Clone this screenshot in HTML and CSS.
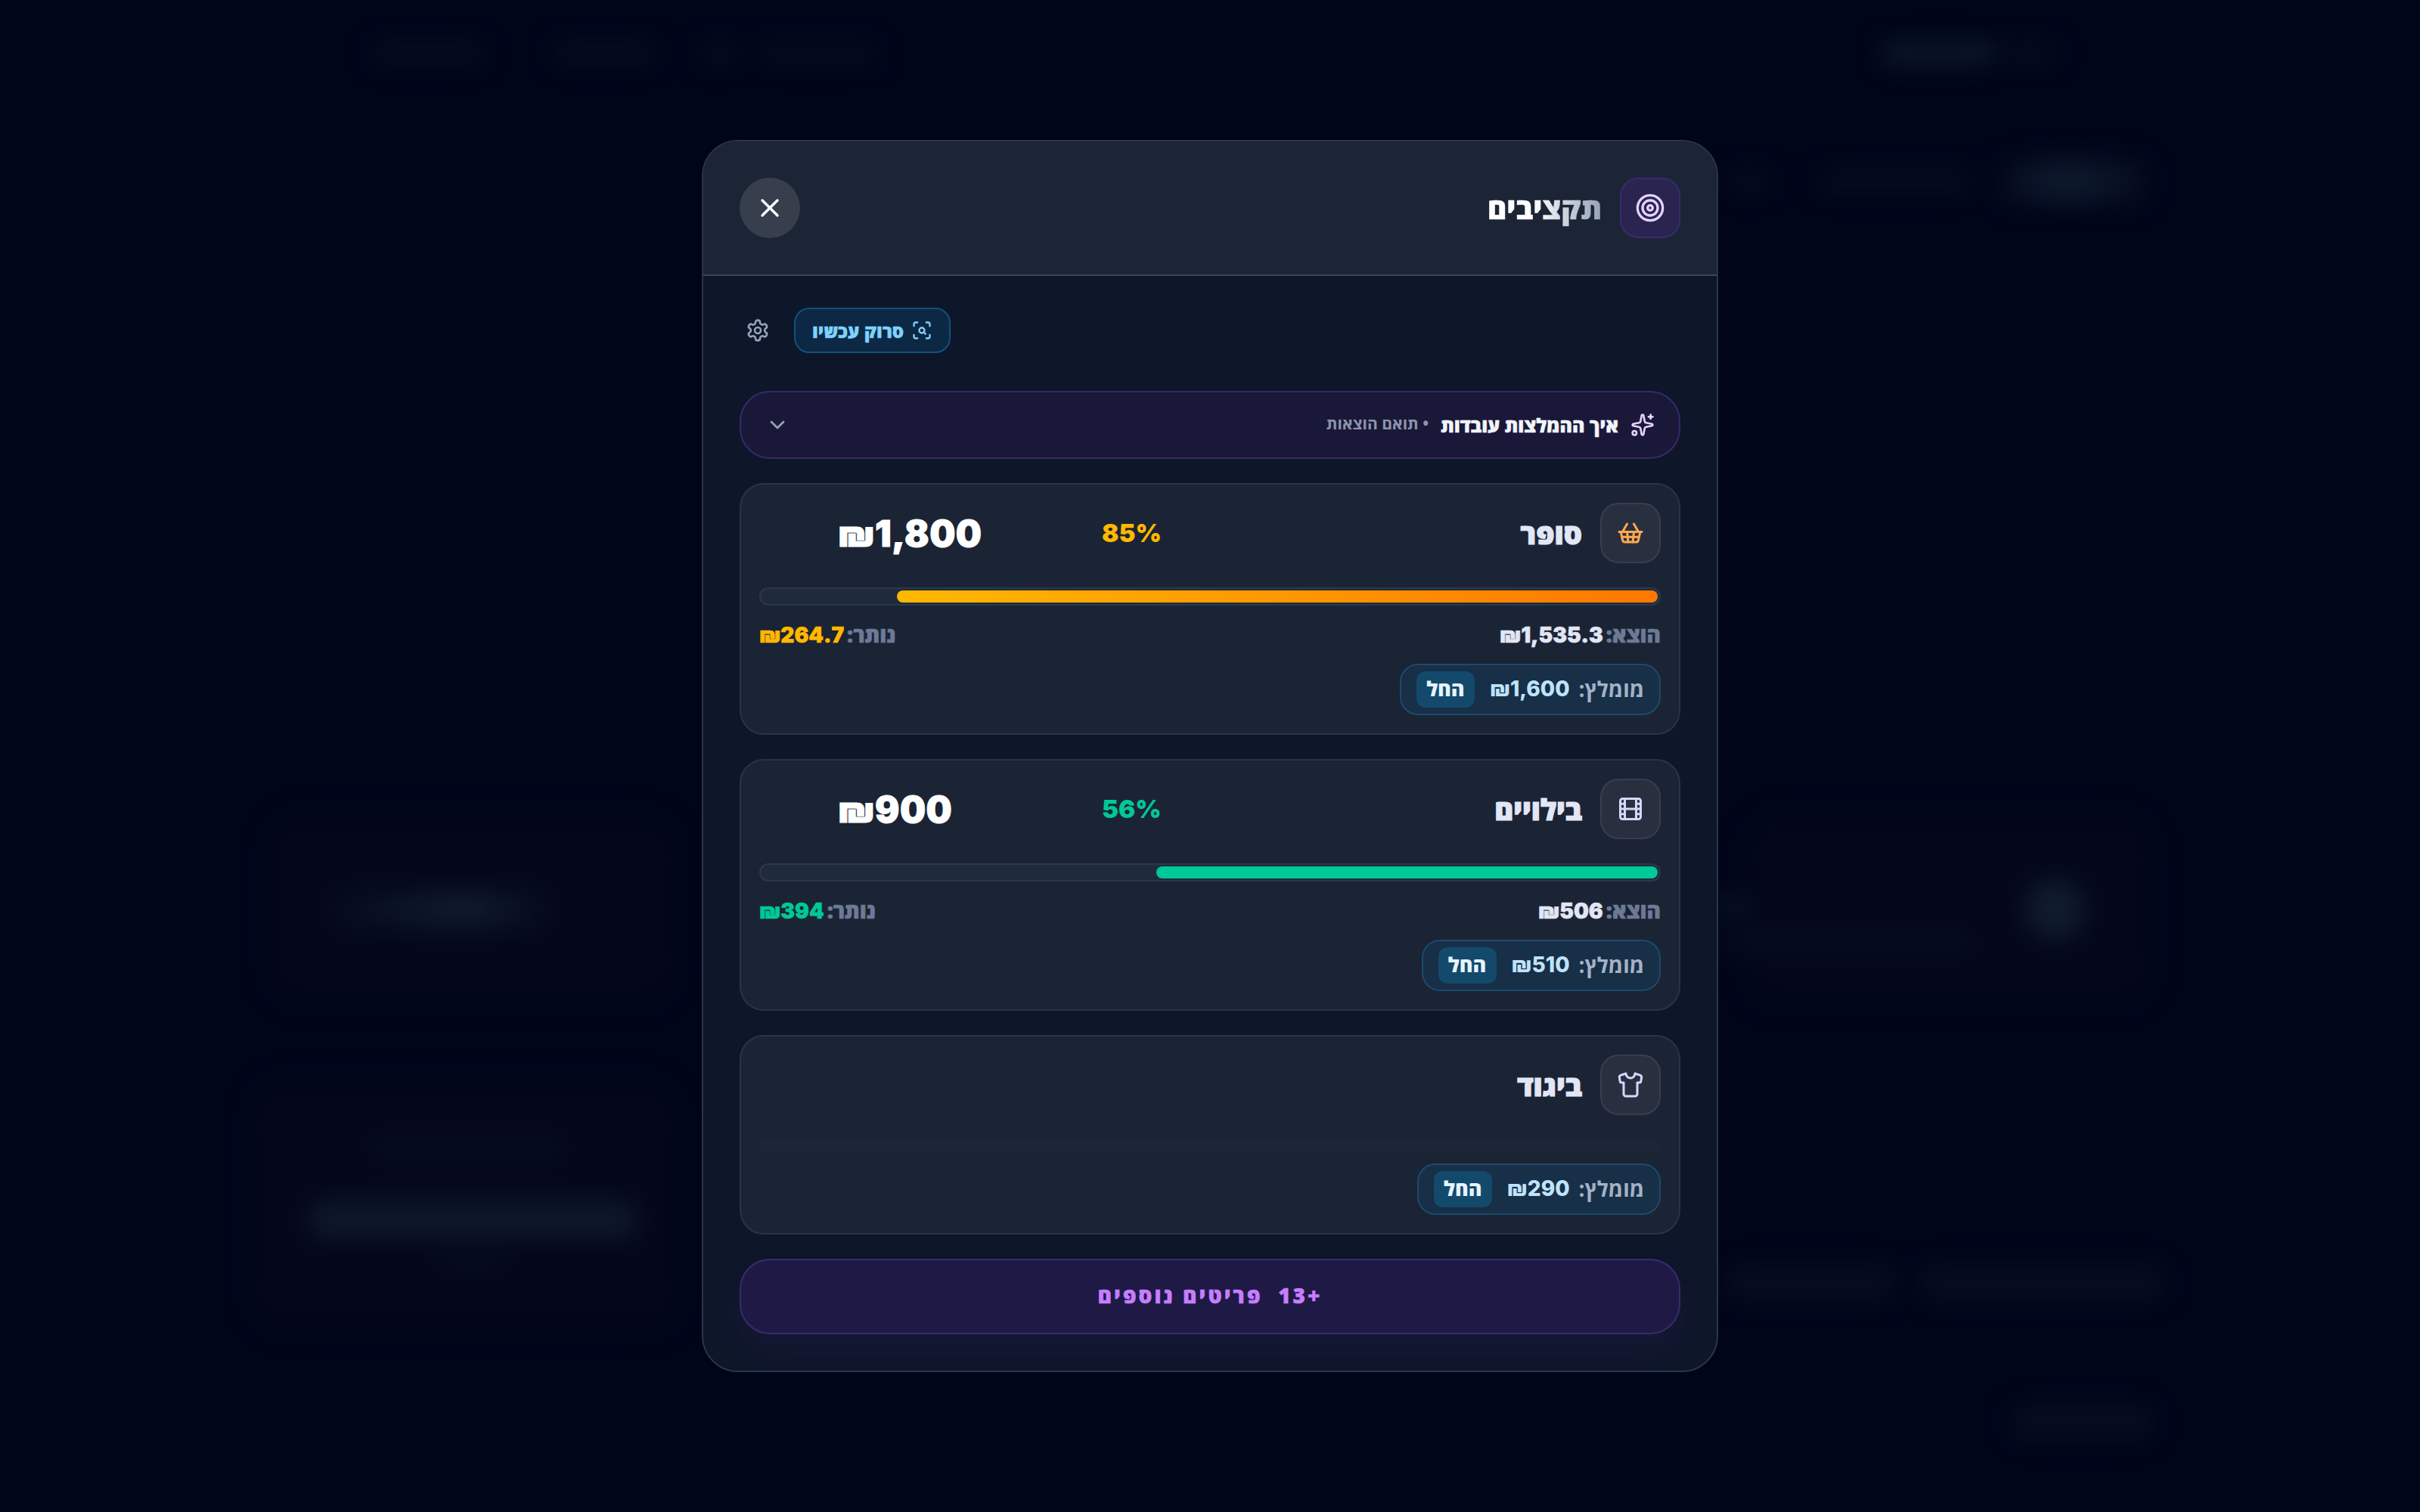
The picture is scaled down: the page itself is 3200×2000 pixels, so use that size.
FILE: index.html

```html
<!DOCTYPE html>
<html lang="he">
<head>
  <meta charset="UTF-8" />
  <meta name="viewport" content="width=device-width, initial-scale=1.0" />
  <title>תקציבים</title>
  <link rel="stylesheet" href="styles.css">
</head>
<body>
  <!-- blurred page behind the dialog -->
  <div class="page-bg">
    <div class="bg-nav">
      <div class="blob nav-a"></div>
      <div class="blob nav-b"></div>
      <div class="blob nav-c"></div>
      <div class="blob nav-e"></div>
      <div class="blob nav-d"></div>
      <div class="blob nav-user"></div>
    </div>
    <div class="bg-tools">
      <div class="blob tool-a"></div>
      <div class="blob tool-b"></div>
      <div class="blob tool-c"></div>
    </div>
    <div class="bg-stats">
      <div class="bg-card stat-left"><div class="blob stat-left-line"></div></div>
      <div class="bg-card stat-right">
        <div class="stat-right-text">
          <div class="blob stat-right-tick"></div>
          <div class="blob stat-right-line"></div>
        </div>
        <div class="blob stat-right-icon"></div>
      </div>
    </div>
    <div class="bg-lower">
      <div class="bg-card total-card">
        <div class="blob total-label"></div>
        <div class="blob total-value"></div>
        <div class="blob total-sub"></div>
      </div>
      <div class="bg-pills">
        <div class="blob pill-a"></div>
        <div class="blob pill-b"></div>
      </div>
    </div>
    <div class="bg-foot"><div class="blob foot-a"></div></div>
  </div>

  <div class="overlay">
    <div class="modal" dir="rtl">
      <div class="modal-header">
        <div class="header-title">
          <div class="header-icon">
            <svg class="icon icon-40" viewBox="0 0 24 24"><circle cx="12" cy="12" r="10"/><circle cx="12" cy="12" r="6"/><circle cx="12" cy="12" r="2"/></svg>
          </div>
          <h2>תקציבים</h2>
        </div>
        <button class="close-btn" aria-label="סגור">
          <svg class="icon icon-40" viewBox="0 0 24 24"><path d="M18 6 6 18"/><path d="m6 6 12 12"/></svg>
        </button>
      </div>

      <div class="modal-body">
        <div class="toolbar">
          <button class="scan-btn">
            <svg class="icon icon-28" viewBox="0 0 24 24"><path d="M3 7V5a2 2 0 0 1 2-2h2"/><path d="M17 3h2a2 2 0 0 1 2 2v2"/><path d="M21 17v2a2 2 0 0 1-2 2h-2"/><path d="M7 21H5a2 2 0 0 1-2-2v-2"/><circle cx="12" cy="12" r="3"/><path d="m16 16-1.9-1.9"/></svg>
            <span>סרוק עכשיו</span>
          </button>
          <button class="gear-btn" aria-label="הגדרות">
            <svg class="icon icon-32" viewBox="0 0 24 24"><path d="M12.22 2h-.44a2 2 0 0 0-2 2v.18a2 2 0 0 1-1 1.73l-.43.25a2 2 0 0 1-2 0l-.15-.08a2 2 0 0 0-2.73.73l-.22.38a2 2 0 0 0 .73 2.73l.15.1a2 2 0 0 1 1 1.72v.51a2 2 0 0 1-1 1.74l-.15.09a2 2 0 0 0-.73 2.73l.22.38a2 2 0 0 0 2.73.73l.15-.08a2 2 0 0 1 2 0l.43.25a2 2 0 0 1 1 1.73V20a2 2 0 0 0 2 2h.44a2 2 0 0 0 2-2v-.18a2 2 0 0 1 1-1.73l.43-.25a2 2 0 0 1 2 0l.15.08a2 2 0 0 0 2.73-.73l.22-.39a2 2 0 0 0-.73-2.73l-.15-.08a2 2 0 0 1-1-1.74v-.5a2 2 0 0 1 1-1.74l.15-.09a2 2 0 0 0 .73-2.73l-.22-.38a2 2 0 0 0-2.73-.73l-.15.08a2 2 0 0 1-2 0l-.43-.25a2 2 0 0 1-1-1.73V4a2 2 0 0 0-2-2z"/><circle cx="12" cy="12" r="3"/></svg>
          </button>
        </div>

        <div class="hint-bar">
          <svg class="icon icon-32 sparkle" viewBox="0 0 24 24"><path d="M11.017 2.814a1 1 0 0 1 1.966 0l1.051 5.558a2 2 0 0 0 1.594 1.594l5.558 1.051a1 1 0 0 1 0 1.966l-5.558 1.051a2 2 0 0 0-1.594 1.594l-1.051 5.558a1 1 0 0 1-1.966 0l-1.051-5.558a2 2 0 0 0-1.594-1.594l-5.558-1.051a1 1 0 0 1 0-1.966l5.558-1.051a2 2 0 0 0 1.594-1.594z"/><path d="M20 2v4"/><path d="M22 4h-4"/><circle cx="4" cy="20" r="2"/></svg>
          <span class="hint-title">איך ההמלצות עובדות</span>
          <span class="hint-sub">• תואם הוצאות</span>
          <svg class="icon icon-32 chevron" viewBox="0 0 24 24"><path d="m6 9 6 6 6-6"/></svg>
        </div>

        <div class="budget-card">
          <div class="card-head">
            <div class="cat-icon">
              <svg class="icon icon-36 basket" viewBox="0 0 24 24"><path d="m15 11-1 9"/><path d="m19 11-4-7"/><path d="M2 11h20"/><path d="m3.5 11 1.6 7.4a2 2 0 0 0 2 1.6h9.8a2 2 0 0 0 2-1.6l1.7-7.4"/><path d="M4.5 15.5h15"/><path d="m5 11 4-7"/><path d="m9 11 1 9"/></svg>
            </div>
            <h3 class="cat-name">סופר</h3>
            <span class="cat-pct amber" dir="ltr">85%</span>
            <div class="cat-amount"><span dir="ltr">₪1,800</span></div>
          </div>
          <div class="bar"><div class="bar-fill fill-amber" style="width: 85%"></div></div>
          <div class="meta">
            <span><span class="meta-label">הוצא:</span><b dir="ltr">₪1,535.3</b></span>
            <span><span class="meta-label">נותר:</span><b class="amber" dir="ltr">₪264.7</b></span>
          </div>
          <div class="rec-row">
            <div class="rec-pill">
              <span class="rec-label">מומלץ:</span>
              <b dir="ltr">₪1,600</b>
              <button class="rec-btn">החל</button>
            </div>
          </div>
        </div>

        <div class="budget-card">
          <div class="card-head">
            <div class="cat-icon">
              <svg class="icon icon-36 cat-line" viewBox="0 0 24 24"><rect x="3" y="3" width="18" height="18" rx="2"/><path d="M7 3v18"/><path d="M3 7.5h4"/><path d="M3 12h18"/><path d="M3 16.5h4"/><path d="M17 3v18"/><path d="M17 7.5h4"/><path d="M17 16.5h4"/></svg>
            </div>
            <h3 class="cat-name">בילויים</h3>
            <span class="cat-pct green" dir="ltr">56%</span>
            <div class="cat-amount"><span dir="ltr">₪900</span></div>
          </div>
          <div class="bar"><div class="bar-fill fill-green" style="width: 56%"></div></div>
          <div class="meta">
            <span><span class="meta-label">הוצא:</span><b dir="ltr">₪506</b></span>
            <span><span class="meta-label">נותר:</span><b class="green" dir="ltr">₪394</b></span>
          </div>
          <div class="rec-row">
            <div class="rec-pill">
              <span class="rec-label">מומלץ:</span>
              <b dir="ltr">₪510</b>
              <button class="rec-btn">החל</button>
            </div>
          </div>
        </div>

        <div class="budget-card">
          <div class="card-head">
            <div class="cat-icon">
              <svg class="icon icon-36 cat-line" viewBox="0 0 24 24"><path d="M20.38 3.46 16 2a4 4 0 0 1-8 0L3.62 3.46a2 2 0 0 0-1.34 2.23l.58 3.47a1 1 0 0 0 .99.84H6v10c0 1.1.9 2 2 2h8a2 2 0 0 0 2-2V10h2.15a1 1 0 0 0 .99-.84l.58-3.47a2 2 0 0 0-1.34-2.23z"/></svg>
            </div>
            <h3 class="cat-name">ביגוד</h3>
          </div>
          <div class="bar-empty"></div>
          <div class="rec-row">
            <div class="rec-pill">
              <span class="rec-label">מומלץ:</span>
              <b dir="ltr">₪290</b>
              <button class="rec-btn">החל</button>
            </div>
          </div>
        </div>

        <button class="more-btn">+13&nbsp; פריטים נוספים</button>
      </div>
    </div>
  </div>
</body>
</html>
```

FILE: styles.css

```css
* {
  box-sizing: border-box;
}
html, body {
  height: 100%;
}
body {
  margin: 0;
  background-color: #01051a;
  color: #e2e6f5;
  font-family: "Open Sans", "DejaVu Sans", sans-serif;
  overflow: hidden;
}
button {
  font-family: inherit;
  border: none;
  background: none;
  color: inherit;
  padding: 0;
}
h2, h3 {
  margin: 0;
}

/* blurred page */
.page-bg {
  height: 100%;
  padding: 0 337px 0 332px;
  filter: blur(16px);
}
.blob {
  background-color: #070d20;
  border-radius: 20px;
}
.bg-card {
  background-color: #030719;
  border-radius: 48px;
}
.bg-nav {
  display: flex;
  align-items: center;
  height: 140px;
  padding: 0 143px 0 159px;
}
.nav-a { width: 150px; height: 26px; }
.nav-b { width: 137px; height: 26px; margin-left: 90px; }
.nav-c { width: 50px; height: 26px; margin-left: 58px; }
.nav-e { width: 160px; height: 22px; margin-left: 25px; }
.nav-d { width: 153px; height: 28px; margin-left: auto; background-color: #0d1a2b; }
.nav-user { width: 70px; height: 22px; margin-left: 10px; }
.bg-tools {
  display: flex;
  justify-content: flex-end;
  align-items: center;
  gap: 38px;
  height: 200px;
  padding-right: 25px;
}
.tool-a { width: 57px; height: 24px; margin-right: 26px; }
.tool-b { width: 204px; height: 24px; }
.tool-c { width: 192px; height: 56px; background: linear-gradient(to right, #060c20, #0e1c2e 45%, #060c20); }
.bg-stats {
  display: flex;
  justify-content: space-between;
  height: 249px;
  margin-top: 738px;
  padding: 0 16px 0 22px;
}
.stat-left {
  display: flex;
  align-items: center;
  width: 540px;
  padding-left: 80px;
}
.stat-left-line {
  width: 293px;
  height: 50px;
  background: linear-gradient(to right, #050a1d, #101c2e 62%, #050a1d);
}
.stat-right {
  display: flex;
  align-items: center;
  justify-content: flex-end;
  gap: 69px;
  width: 539px;
  padding-right: 90px;
}
.stat-right-text {
  flex-shrink: 0;
  width: 337px;
  margin-top: 36px;
}
.stat-right-tick { width: 40px; height: 30px; margin-bottom: 20px; background-color: #0b1527; }
.stat-right-line { width: 337px; height: 24px; }
.stat-right-icon { flex-shrink: 0; width: 80px; height: 80px; border-radius: 50%; background-color: #0f1c2e; }
.bg-lower {
  display: flex;
  justify-content: space-between;
  margin-top: 102px;
}
.total-card {
  width: 567px;
  height: 331px;
  padding: 76px 58px 0 76px;
}
.total-label { width: 255px; height: 26px; margin-left: 83px; }
.total-value { width: 434px; height: 50px; margin-top: 57px; background-color: #0e1829; }
.total-sub { width: 90px; height: 18px; margin: 22px 0 0 170px; }
.bg-pills {
  display: flex;
  gap: 32px;
  margin-top: 245px;
}
.pill-a { width: 223px; height: 44px; }
.pill-b { width: 325px; height: 44px; }
.bg-foot {
  display: flex;
  justify-content: flex-end;
  margin-top: 99px;
}
.foot-a { width: 188px; height: 44px; margin-right: 16px; }

/* dialog */
.overlay {
  position: fixed;
  inset: 0;
  display: flex;
  justify-content: center;
  align-items: center;
}
.modal {
  width: 1344px;
  background-color: #0e1629;
  border: 2px solid #2a3548;
  border-radius: 48px;
  overflow: hidden;
}
.modal-header {
  display: flex;
  justify-content: space-between;
  align-items: center;
  padding: 48px;
  background-color: #1c2536;
  border-bottom: 2px solid #3b4656;
}
.header-title {
  display: flex;
  align-items: center;
  gap: 24px;
}
.header-icon {
  display: flex;
  justify-content: center;
  align-items: center;
  width: 80px;
  height: 80px;
  background-color: #2a2450;
  border: 2px solid #3a2a6b;
  border-radius: 24px;
  color: #e3d2ff;
}
.header-title h2 {
  font-size: 39px;
  font-weight: 800;
  line-height: 56px;
  color: transparent;
  background: linear-gradient(to left, #94a3b8, #ffffff 60%);
  -webkit-background-clip: text;
  background-clip: text;
}
.close-btn {
  display: flex;
  justify-content: center;
  align-items: center;
  width: 80px;
  height: 80px;
  background-color: #373e4c;
  border-radius: 50%;
  color: #fff;
}
.icon {
  display: block;
  fill: none;
  stroke: currentColor;
  stroke-width: 2;
  stroke-linecap: round;
  stroke-linejoin: round;
  flex-shrink: 0;
}
.icon-28 { width: 28px; height: 28px; }
.icon-32 { width: 32px; height: 32px; }
.icon-36 { width: 36px; height: 36px; }
.icon-40 { width: 40px; height: 40px; }

.modal-body {
  padding: 42px 48px 48px;
}
.toolbar {
  display: flex;
  justify-content: flex-end;
  align-items: center;
  gap: 32px;
  margin-bottom: 50px;
}
.scan-btn {
  display: flex;
  align-items: center;
  gap: 10px;
  height: 60px;
  padding: 0 22px;
  background-color: #0c2844;
  border: 2px solid #15507a;
  border-radius: 20px;
  color: #7dd3fc;
  font-size: 24px;
  font-weight: 800;
}
.gear-btn {
  display: flex;
  margin-left: 8px;
  color: #94a3b8;
}
.hint-bar {
  display: flex;
  align-items: center;
  gap: 16px;
  height: 90px;
  padding: 0 32px;
  background-color: #1a1838;
  border: 2px solid #37296b;
  border-radius: 40px;
  margin-bottom: 32px;
}
.sparkle {
  color: #e3d2ff;
}
.hint-title {
  font-size: 25px;
  font-weight: 800;
  color: #f1f4fb;
}
.hint-sub {
  margin-top: -4px;
  font-size: 21px;
  font-weight: 700;
  color: #8b95a8;
}
.chevron {
  margin-right: auto;
  color: #94a3b8;
}

.budget-card {
  padding: 24px;
  margin-bottom: 32px;
  background-color: #1b2435;
  border: 2px solid #27344a;
  border-radius: 32px;
}
.card-head {
  display: flex;
  align-items: center;
  padding-left: 104px;
}
.cat-icon {
  display: flex;
  justify-content: center;
  align-items: center;
  width: 80px;
  height: 80px;
  background-color: #283040;
  border: 2px solid #3d3a52;
  border-radius: 24px;
}
.basket {
  color: #ffa94d;
}
.cat-line {
  color: #d4d8fb;
}
.cat-name {
  flex: 1;
  margin-right: 24px;
  font-size: 38px;
  font-weight: 800;
  -webkit-text-stroke: 1.2px #e2e6f5;
  color: #e2e6f5;
}
.cat-pct {
  font-family: Inter, sans-serif;
  font-size: 33px;
  font-weight: 900;
}
.cat-amount {
  width: 349px;
  text-align: left;
  font-family: Inter, "DejaVu Sans", sans-serif;
  font-size: 48px;
  font-weight: 900;
  letter-spacing: 0.5px;
  -webkit-text-stroke: 1px #fff;
  color: #fff;
}
.amber { color: #ffb800; }
.green { color: #00c897; }
.bar {
  height: 24px;
  margin-top: 32px;
  padding: 2px;
  background-color: #1f2b3d;
  border: 2px solid #2b384b;
  border-radius: 12px;
}
.bar-fill {
  height: 100%;
  border-radius: 8px;
}
.fill-amber {
  background: linear-gradient(to right, #ffb800, #ff7700);
}
.fill-green {
  background-color: #00c897;
}
.bar-empty {
  height: 13px;
  margin: 34px 0 17px;
  background-color: #1c2637;
}
.meta {
  display: flex;
  justify-content: space-between;
  margin-top: 22px;
  font-size: 28px;
  line-height: 32px;
  font-weight: 800;
}
.meta b {
  margin-right: 4px;
  font-family: Inter, "DejaVu Sans", sans-serif;
  font-weight: 900;
  -webkit-text-stroke: 0.6px;
}
.meta-label {
  color: #6d7a96;
  -webkit-text-stroke: 0.6px #6d7a96;
}
.rec-row {
  display: flex;
  margin-top: 22px;
}
.bar-empty + .rec-row {
  margin-top: 0;
}
.rec-pill {
  display: flex;
  align-items: center;
  gap: 12px;
  height: 68px;
  padding: 0 20px;
  background-color: #172f47;
  border: 2px solid #1c4a6e;
  border-radius: 24px;
  font-size: 28px;
}
.rec-label {
  margin-top: -3px;
  font-weight: 700;
  color: #a4b2c6;
}
.rec-pill b {
  margin-top: -3px;
  font-family: Inter, "DejaVu Sans", sans-serif;
  font-weight: 800;
  color: #bfe3fb;
}
.rec-btn {
  width: 77px;
  height: 48px;
  margin-right: 8px;
  padding-bottom: 3px;
  background-color: #134a6c;
  border-radius: 12px;
  font-size: 27px;
  font-weight: 800;
  color: #e6f4ff;
}
.more-btn {
  display: block;
  width: 100%;
  height: 100px;
  padding-bottom: 5px;
  background-color: #1e1a45;
  border: 2px solid #3a2a6e;
  border-radius: 40px;
  box-shadow: 0 20px 40px rgba(90, 50, 170, 0.1);
  color: #c77dff;
  font-size: 28px;
  font-weight: 800;
  letter-spacing: 3px;
}
.header-title h2,
.hint-title,
.scan-btn span,
.more-btn {
  -webkit-text-stroke: 0.5px;
}
```
